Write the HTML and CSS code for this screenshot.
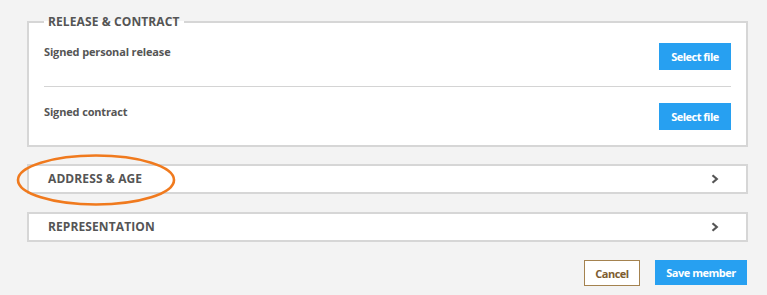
FILE: index.html
```html
<!DOCTYPE html>
<html>
<head>
<meta charset="utf-8">
<link rel="stylesheet" href="styles.css">
</head>
<body>
<div class="page">
  <fieldset class="group">
    <legend class="group-title">Release &amp; Contract</legend>
    <div class="file-row">
      <span class="file-label">Signed personal release</span>
      <button class="btn btn-blue btn-file">Select file</button>
    </div>
    <div class="file-row last">
      <span class="file-label">Signed contract</span>
      <button class="btn btn-blue btn-file">Select file</button>
    </div>
  </fieldset>

  <div class="collapse highlighted">
    <span class="collapse-title">Address &amp; Age</span>
    <svg class="chevron" width="8" height="10" viewBox="0 0 8 10"><path d="M1.5 1.2 L5.8 5 L1.5 8.8" fill="none" stroke="#555" stroke-width="2.2"/></svg>
    <svg class="annotation" width="170" height="60" viewBox="0 0 170 60"><ellipse cx="80" cy="30" rx="78" ry="24.5" fill="none" stroke="#f07a1e" stroke-width="2.6"/></svg>
  </div>

  <div class="collapse">
    <span class="collapse-title">Representation</span>
    <svg class="chevron" width="8" height="10" viewBox="0 0 8 10"><path d="M1.5 1.2 L5.8 5 L1.5 8.8" fill="none" stroke="#555" stroke-width="2.2"/></svg>
  </div>

  <div class="actions">
    <button class="btn btn-outline">Cancel</button>
    <button class="btn btn-blue btn-save">Save member</button>
  </div>
</div>
</body>
</html>
```

FILE: styles.css
```css
html, body {
  margin: 0;
  padding: 0;
  background: #f3f3f3;
}

body {
  font-family: "Open Sans", "Liberation Sans", sans-serif;
  color: #555;
}

.page {
  padding: 14px 19px 0 27px;
  display: flex;
  flex-direction: column;
}

.group {
  margin: 0;
  padding: 0 15px 0 15px;
  border: 2px solid #d6d6d6;
  background: #fff;
  min-width: 0;
}

.group-title {
  font-size: 12px;
  font-weight: 700;
  line-height: 16px;
  text-transform: uppercase;
  color: #555;
  padding: 0 4px;
  margin-left: 0;
  letter-spacing: 0.1px;
}

.file-row {
  display: flex;
  justify-content: space-between;
  align-items: flex-start;
  padding: 13px 0 16px;
  border-bottom: 1px solid #d4d4d4;
}

.file-row.last {
  border-bottom: none;
  padding: 16px 0 15px;
}

.file-label {
  font-size: 11px;
  font-weight: 700;
  line-height: 16px;
  margin-top: 1px;
  letter-spacing: -0.15px;
  color: #555;
}

.btn {
  font-family: "Open Sans", "Liberation Sans", sans-serif;
  font-size: 11px;
  font-weight: 700;
  letter-spacing: -0.5px;
  border: none;
  cursor: pointer;
  padding: 0;
  box-sizing: border-box;
}

.btn-blue {
  background: #27a0f1;
  color: #fff;
}

.btn-file {
  width: 72px;
  height: 27px;
}

.collapse {
  position: relative;
  margin-top: 17px;
  height: 30px;
  box-sizing: border-box;
  border: 2px solid #d6d6d6;
  background: #fff;
  display: flex;
  align-items: center;
  justify-content: space-between;
  padding: 0 27px 0 19px;
}

.collapse + .collapse {
  margin-top: 18px;
}

.collapse-title {
  font-size: 12px;
  font-weight: 700;
  text-transform: uppercase;
  letter-spacing: 0.1px;
  color: #555;
  line-height: 16px;
}

.chevron {
  display: block;
}

.annotation {
  position: absolute;
  left: -13px;
  top: -16px;
  pointer-events: none;
}

.actions {
  display: flex;
  justify-content: flex-end;
  gap: 15px;
  margin-top: 18px;
  padding-right: 1px;
}

.btn-outline {
  background: #fff;
  border: 1px solid #a4824f;
  color: #7d5d30;
  width: 56px;
  height: 26px;
}

.btn-save {
  width: 92px;
  height: 25px;
}
```
